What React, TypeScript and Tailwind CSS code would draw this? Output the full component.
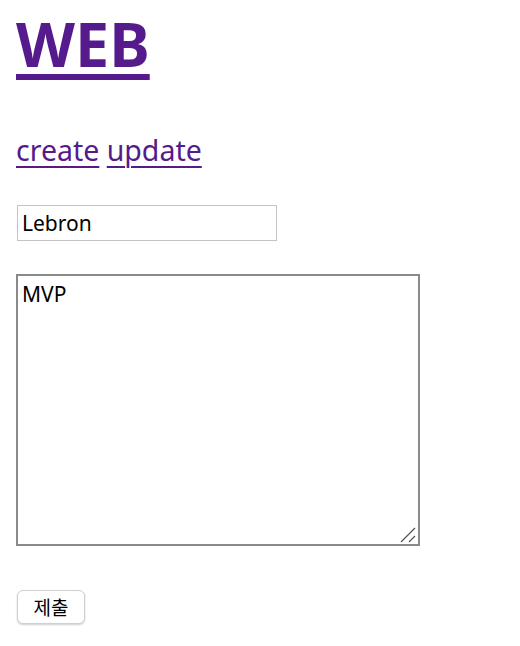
import { useState } from 'react';

export default function App() {
  const [title, setTitle] = useState('Lebron');
  const [desc, setDesc] = useState('MVP');

  return (
    <div className="min-h-[646px] bg-white px-4 pt-[13px] font-['Noto_Sans','Noto_Sans_CJK_KR',sans-serif] text-black">
      <h1 className="m-0 text-[61px] leading-[62px] font-bold">
        <a
          href="#"
          className="text-[#551a8b] underline decoration-[6px] underline-offset-[7px]"
        >
          WEB
        </a>
      </h1>

      <p className="mt-[61px] text-[28.5px] leading-[28px]">
        <a href="#" className="text-[#551a8b] underline decoration-2 underline-offset-[5px]">
          create
        </a>{' '}
        <a href="#" className="text-[#551a8b] underline decoration-2 underline-offset-[5px]">
          update
        </a>
      </p>

      <form className="flex flex-col items-start" onSubmit={(e) => e.preventDefault()}>
        <input
          type="text"
          value={title}
          onChange={(e) => setTitle(e.target.value)}
          className="mt-[41px] ml-px h-9 w-[260px] border border-[#c4c4c4] px-1 text-[21px] leading-7 outline-none"
        />
        <div className="relative mt-[33px]">
          <textarea
            value={desc}
            onChange={(e) => setDesc(e.target.value)}
            className="block h-[272px] w-[404px] resize-none border-2 border-[#8a8a8a] px-1 pt-1 text-[21px] leading-7 outline-none"
          />
          {/* resize grip */}
          <svg
            className="pointer-events-none absolute right-[4px] bottom-[3px]"
            width="16"
            height="16"
            viewBox="0 0 16 16"
          >
            <line x1="1" y1="15" x2="15" y2="1" stroke="#555" strokeWidth="1.3" />
            <line x1="9" y1="15" x2="15" y2="9" stroke="#555" strokeWidth="1.3" />
          </svg>
        </div>
        <button
          type="submit"
          className="mt-[44px] ml-px h-[34px] w-[68px] rounded-md border border-[#d0d0d0] bg-white text-[19px] shadow-[0_1px_2px_rgba(0,0,0,0.2)] font-['Noto_Sans_CJK_KR',sans-serif]"
        >
          제출
        </button>
      </form>
    </div>
  );
}
